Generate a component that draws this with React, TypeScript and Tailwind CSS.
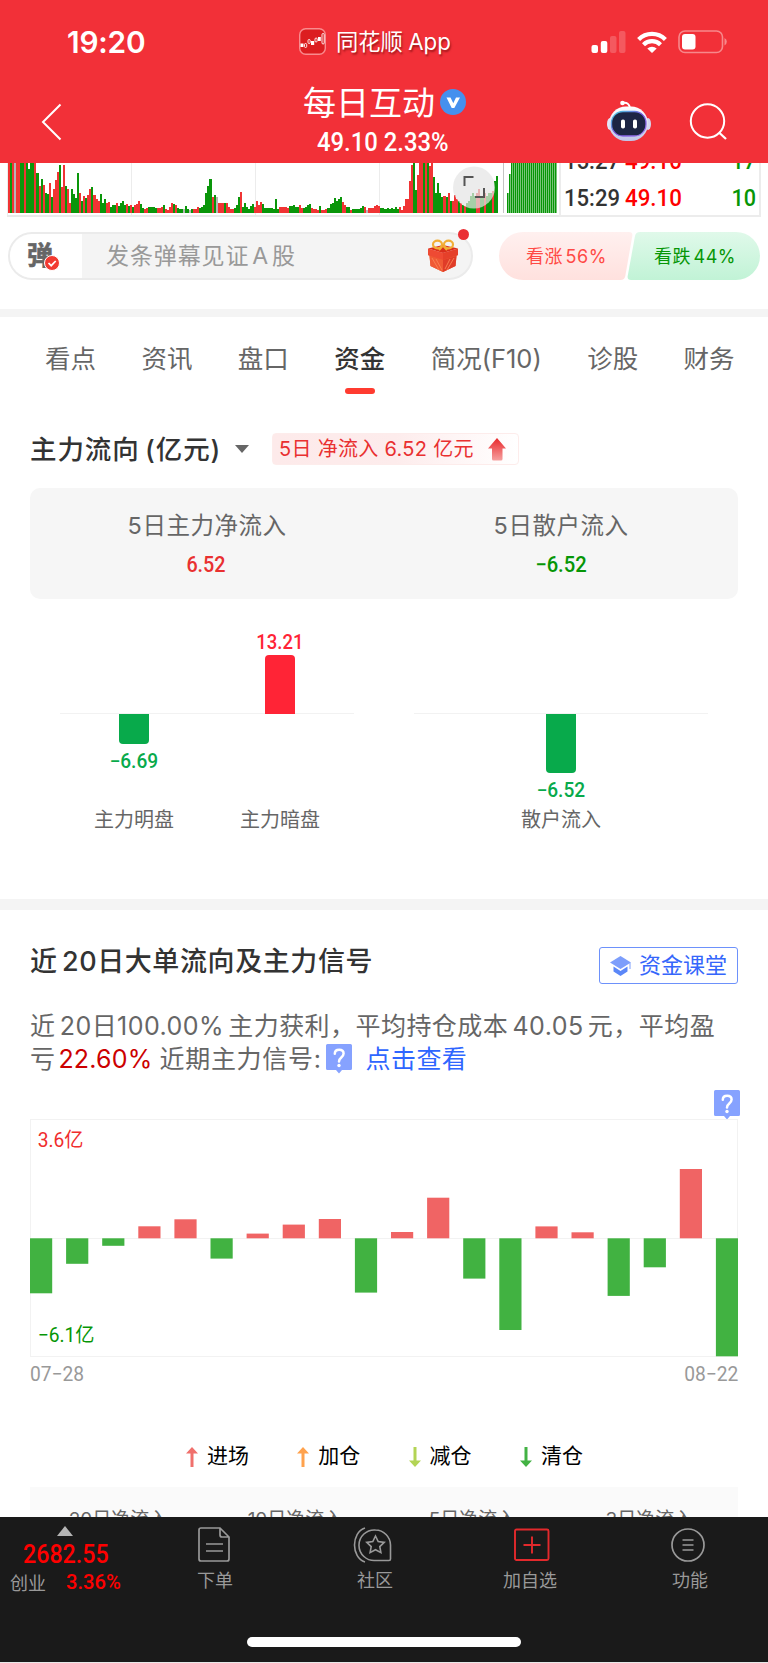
import { useState } from 'react';

const volumes =
  'r150 g150 r150 x150 r150 r150 g150 g150 r150 g150 g130 g150 g150 r148 g118 r80 g100 r82 g58 g55 r90 g48 r70 r98 r122 g142 r76 r142 g80 r70 r28 g70 g55 g44 g118 r60 g36 r50 g45 r52 r70 g76 r54 r42 r34 g56 g30 g40 r28 r32 g18 g22 g22 r28 g20 g28 g36 g22 r26 g20 r22 g18 r22 r26 r36 g26 g14 r12 r14 g16 g18 g18 g14 r14 r14 r18 g22 r12 r8 r18 r30 g26 r24 g14 g12 g12 x12 g20 g12 x8 g12 r10 r12 r16 g14 g16 g22 g60 g80 g100 r46 g54 x48 r30 r28 r28 g30 r28 r16 r12 r12 g14 g22 g46 r62 g16 g30 g18 g12 g20 g26 r18 r34 r22 r32 g26 g14 g14 g14 g14 g12 g40 g12 r16 r18 r18 r17 r14 g20 g20 g22 g16 g16 r22 r14 g14 g18 g22 g26 r14 r12 r12 r8 g20 r8 r8 r10 g14 g26 g30 g44 g34 g40 g46 r32 r22 g16 g16 r8 g12 g10 g12 g12 g14 g20 r16 x8 r14 r14 r14 r20 r22 r20 g14 g14 g12 g14 g12 g14 g12 g16 g12 r16 r8 r20 r40 r40 r96 r142 g150 g68 r112 r150 r150 g150 r150 g150 r140 r150 g108 g60 g88 g60 g48 r50 g48 r60 g36 r34 r54 r40 g36 r28 g24 r20 g30 g34 g50 g60 g50 r60 r70 g50 g50 r60 g50 g60 g60 r66 g95 g110'
    .split(' ')
    .map((s) => ({ tone: s[0], h: Number(s.slice(1)) / 3 }));

const toneColor: Record<string, string> = { r: '#f03434', g: '#0a960a', x: '#b5b5b5' };

// 正为流入，负为流出
const flows = [
  -55, -25.5, -7.5, 12, 19, -20.3, 4.7, 13.7, 19.3, -54.3, 6.3, 40.6, -40.3, -91.7, 11.9, 6, -57.6, -29, 69.3, -118,
];

const tabs = ['看点', '资讯', '盘口', '资金', '简况(F10)', '诊股', '财务'];

const signals = [
  { name: '进场', color: '#f0706c', up: true },
  { name: '加仓', color: '#ffa24d', up: true },
  { name: '减仓', color: '#b3d455', up: false },
  { name: '清仓', color: '#43b244', up: false },
];

function StatusBar() {
  return (
    <div className="flex h-[80px] items-center pt-[4px] text-white">
      <span className="ml-[67px] w-[232px] font-['Inter'] text-[29.800px] font-semibold tracking-[-0.200px]">19:20</span>
      <svg width="27" height="27" viewBox="0 0 27 27" className="-mt-[2px]">
        <rect x="0.7" y="0.7" width="25.6" height="25.6" rx="6" fill="#dc1d20" stroke="#f98b8e" strokeWidth="1.4" />
        <path d="M1.500 19v-3.500h3V19zM12 17v-4h3.200v4zM19 13V9h2.800v4z" fill="#fff" />
        <g fill="none" stroke="#fff" strokeWidth="0.9">
          <rect x="5.500" y="15.500" width="2.200" height="4" rx="1.100" />
          <rect x="9" y="11.500" width="2.200" height="4" rx="1.100" />
          <rect x="16" y="10" width="2.200" height="4" rx="1.100" />
          <rect x="23" y="5.500" width="2.200" height="10.500" rx="1.100" />
        </g>
      </svg>
      <span className="ml-[10px] w-[254px] whitespace-nowrap font-['Inter','Noto_Sans_CJK_SC',sans-serif] text-[22.300px] [text-shadow:1px_2px_2px_rgba(90,0,0,0.55)] [word-spacing:-1px]">
        同花顺 App
      </span>
      <svg width="36" height="23" viewBox="0 0 36 23" fill="#fff" className="ml-px">
        <rect x="0.500" y="14" width="6.500" height="8" rx="2" />
        <rect x="9.800" y="10" width="6.500" height="12" rx="2" />
        <rect x="19" y="5" width="6.500" height="17" rx="2" opacity="0.2" />
        <rect x="28" y="0" width="6.500" height="22" rx="2" opacity="0.2" />
      </svg>
      <svg width="30" height="22" viewBox="0 0 30 22" className="ml-[10px]">
        <g fill="none" stroke="#fff" strokeWidth="4.200">
          <path d="M1.600 8.500a19 19 0 0 1 26.800 0" />
          <path d="M6.500 13.700a12 12 0 0 1 17 0" />
        </g>
        <path d="M10.300 17.600a6.700 6.700 0 0 1 9.400 0L15 22z" fill="#fff" />
      </svg>
      <svg width="50" height="24" viewBox="0 0 50 24" className="ml-[11px]">
        <rect x="1" y="1" width="43.500" height="21.500" rx="6" fill="none" stroke="#f7888b" strokeWidth="1.600" />
        <rect x="4" y="4" width="13.500" height="15.500" rx="3" fill="#fff" />
        <path d="M46.500 8v7.500q2.300-1.300 2.300-3.750T46.500 8z" fill="#f7888b" />
      </svg>
    </div>
  );
}

function Robot() {
  return (
    <svg width="46" height="42" viewBox="0 0 46 42">
      <defs>
        <linearGradient id="shell" x1="0" y1="0" x2="0" y2="1">
          <stop offset="0" stopColor="#ffffff" />
          <stop offset="1" stopColor="#bfc4e8" />
        </linearGradient>
        <linearGradient id="ring" x1="0" y1="0" x2="1" y2="1">
          <stop offset="0" stopColor="#42d4dc" />
          <stop offset="0.5" stopColor="#7b57e0" />
          <stop offset="1" stopColor="#a07ef2" />
        </linearGradient>
      </defs>
      <path d="M17 3q6-1 7 5" fill="none" stroke="#fff" strokeWidth="2" />
      <circle cx="16.500" cy="3" r="2.300" fill="#fff" />
      <ellipse cx="4" cy="24" rx="3" ry="6" fill="#e3e5f7" />
      <ellipse cx="42" cy="24" rx="3" ry="6" fill="#d5d8f0" />
      <rect x="3" y="6.500" width="39" height="34.500" rx="17" fill="url(#shell)" />
      <rect x="5.500" y="11.500" width="34.500" height="24.500" rx="11.500" fill="#1d2544" stroke="url(#ring)" strokeWidth="1.300" />
      <rect x="15" y="19.500" width="4" height="9" rx="1.800" fill="#fff" />
      <rect x="27" y="19.500" width="4" height="9" rx="1.800" fill="#fff" />
    </svg>
  );
}

function Header() {
  return (
    <header className="h-[163px] bg-[#f23038]">
      <StatusBar />
      <div className="flex h-[83px] text-white">
        <svg width="22" height="40" viewBox="0 0 22 40" className="ml-[41px] mt-[22px]">
          <path d="M19.500 2.500 2 20l17.500 17.500" fill="none" stroke="#fff" strokeWidth="2" />
        </svg>
        <div className="ml-[240px] w-[303px]">
          <div className="flex h-[42px] items-center">
            <span className="font-['Noto_Sans_CJK_SC',sans-serif] text-[33px] leading-[40px]">每日互动</span>
            <svg width="26" height="26" viewBox="0 0 26 26" className="ml-[5px] mt-[2px]">
              <circle cx="13" cy="13" r="13" fill="#4590ee" />
              <path d="M6.500 8.500h4l2.800 5.800L16 8.500h4L14.300 19h-2.600z" fill="#fff" />
            </svg>
          </div>
          <div className="ml-[14px] mt-[3px] w-fit origin-left scale-x-[0.935] whitespace-nowrap font-['Roboto'] text-[25.500px] font-medium leading-[34px]">
            49.10 2.33%
          </div>
        </div>
        <div className="mt-[20px]">
          <Robot />
        </div>
        <svg width="40" height="40" viewBox="0 0 40 40" className="ml-[37px] mt-[22px]">
          <circle cx="18.500" cy="19" r="16.700" fill="none" stroke="#fff" strokeWidth="2" />
          <path d="m30 30.500 7 6.500" stroke="#fff" strokeWidth="2.300" />
        </svg>
      </div>
    </header>
  );
}

function TradeRow({ time, price, amount }: { time: string; price: string; amount: string }) {
  return (
    <div className="flex h-[37px]">
      <span className="ml-[3px] w-[61px] origin-left scale-x-[0.9] text-[#333]">{time}</span>
      <span className="w-[80px] origin-left scale-x-[0.91] text-[#fe0000]">{price}</span>
      <span className="w-[51px] origin-right scale-x-[0.88] text-right text-[#069606]">{amount}</span>
    </div>
  );
}

function VolumePanel() {
  return (
    <div className="flex h-[54px] overflow-hidden bg-white">
      <div className="relative">
        <svg width="559" height="54" viewBox="0 0 559 54" shapeRendering="crispEdges">
          <path d="M7.500 0V53M131 0v53M255 0v53M379 0v53" stroke="#ececec" />
          <path d="M7 52.500h552" stroke="#e9e9e9" strokeWidth="2" />
          <path d="M503.500 0v50" stroke="#c4c4c4" strokeWidth="1.500" />
          {volumes.map((v, i) => (
            <rect key={i} x={8 + i * 2.035} y={49.700 - v.h} width="2.035" height={v.h} fill={toneColor[v.tone]} />
          ))}
          {Array.from({ length: 25 }, (_, i) => {
            const h = i === 0 ? 20 : i === 1 ? 39 : 50;
            return (
              <g key={i}>
                <rect x={506.500 + i * 2} y={49.700 - h} width="2" height={h} fill="#78c478" />
                <rect x={506.500 + i * 2} y={49.700 - h} width="1" height={h} fill="#069606" />
              </g>
            );
          })}
        </svg>
        <svg width="43" height="43" viewBox="0 0 43 43" className="absolute left-[453px] top-[3px]">
          <circle cx="21" cy="21.500" r="21" fill="#e5e5e5" fillOpacity="0.720" />
          <path d="M11.500 20v-9h9M31 22v9h-9" fill="none" stroke="#555" strokeWidth="2" />
        </svg>
      </div>
      <div className="w-[202px] border-x-2 border-b-2 border-[#ececec] font-['Roboto'] text-[24.500px] font-medium leading-[36px]">
        <div className="-mt-[20px]">
          <TradeRow time="15:27" price="49.10" amount="17" />
          <TradeRow time="15:29" price="49.10" amount="10" />
        </div>
      </div>
    </div>
  );
}

function Gift() {
  return (
    <svg width="32" height="34" viewBox="0 0 32 34">
      <path d="M1 10 16 14l15-4v6l-1.500 1-1 10L16 33 3.500 27l-1-10L1 16z" fill="#ee5a31" />
      <path d="M1 9.500 16 6l15 3.500L16 14z" fill="#d92d1c" />
      <path d="M16 14 31 9.500V16l-15 5z" fill="#e5402a" />
      <path d="M16 14 1 9.500V16l15 5z" fill="#ee4a33" />
      <path d="M2.500 17 16 21v12L3.500 27z" fill="#f05a35" />
      <path d="M29.500 17 16 21v12l12.500-6z" fill="#e03c28" />
      <path d="m5 19 7 12M9 20l6 11M27 19l-7 12M23 20l-5 10" stroke="#f98355" strokeWidth="0.9" />
      <g fill="none" stroke="#f2ae36" strokeWidth="2.200">
        <ellipse cx="10.500" cy="5.500" rx="4.500" ry="3.800" />
        <ellipse cx="21.500" cy="5.500" rx="4.500" ry="3.800" />
        <path d="m15.500 7-3.500 4M16.500 7l3.500 4" />
      </g>
    </svg>
  );
}

function DanmuRow() {
  return (
    <div className="flex h-[92px] pt-[15px] font-['Inter','Noto_Sans_CJK_SC',sans-serif]">
      <div className="relative ml-[8px] flex h-[48px] w-[465px] rounded-full border-2 border-[#ebebeb] bg-[#f4f4f4]">
        <div className="relative h-[44px] w-[72px] rounded-l-full bg-white">
          <span className="ml-[17px] font-['Noto_Sans_CJK_SC',sans-serif] text-[26px] font-bold leading-[40px] text-[#666] [-webkit-text-stroke:0.600px_#666]">
            弹
          </span>
          <svg width="16" height="16" viewBox="0 0 16 16" className="absolute left-[34px] top-[21px]">
            <circle cx="8" cy="8" r="7.500" fill="#f23a31" stroke="#fff" />
            <path d="m4.500 8 2.700 2.700 4.500-4.700" fill="none" stroke="#fff" strokeWidth="1.700" />
          </svg>
        </div>
        <span className="ml-[24px] whitespace-nowrap text-[23px] leading-[44px] tracking-[0.900px] text-[#999] [word-spacing:-4.500px]">
          发条弹幕见证 A 股
        </span>
        <div className="absolute left-[417px] top-[5px]">
          <Gift />
        </div>
        <i className="absolute left-[448px] top-[-5px] h-[11px] w-[11px] rounded-full bg-[#ea2f35]"></i>
      </div>
      <div className="relative ml-[26px] h-[48px] w-[262px]">
        <svg width="262" height="48" viewBox="0 0 262 48" className="absolute inset-0">
          <defs>
            <linearGradient id="up" x1="0" y1="0" x2="0" y2="1">
              <stop offset="0" stopColor="#fff0ef" />
              <stop offset="1" stopColor="#ffe1de" />
            </linearGradient>
            <linearGradient id="down" x1="0" y1="0" x2="0" y2="1">
              <stop offset="0" stopColor="#e0f9ea" />
              <stop offset="1" stopColor="#c1f3d6" />
            </linearGradient>
          </defs>
          <path d="M24 0H130q4 0 3.300 4l-7 40q-.7 4-4.700 4H24A24 24 0 0 1 24 0z" fill="url(#up)" />
          <path d="M141 0h96a24 24 0 0 1 0 48H132q-4 0-3.300-4l7.300-40q.8-4 5-4z" fill="url(#down)" />
        </svg>
        <div className="relative flex h-[48px] items-center whitespace-nowrap text-[18px] tracking-[0.500px] [word-spacing:-3px]">
          <span className="ml-[27px] w-[128px] text-[#ff4a45]">看涨 56%</span>
          <span className="text-[#069606]">看跌 44%</span>
        </div>
      </div>
    </div>
  );
}

function FundFlow() {
  return (
    <section className="h-[481px] px-[30px]">
      <div className="flex h-[38px] items-center">
        <h2 className="mt-[2px] w-[205px] whitespace-nowrap font-['Inter','Noto_Sans_CJK_SC',sans-serif] text-[26.500px] font-medium tracking-[0.900px] text-[#333] [word-spacing:-2.500px]">
          主力流向 (亿元)
        </h2>
        <svg width="14" height="8" viewBox="0 0 14 8">
          <path d="M0 0h14L7 8z" fill="#666" />
        </svg>
        <div className="ml-[23px] flex h-[32px] w-[247px] items-center rounded border border-[#fdeceb] bg-linear-to-r from-[#fdeaea] via-[#fdecec] to-white pl-[6px]">
          <span className="w-[209px] whitespace-nowrap font-['Inter','Noto_Sans_CJK_SC',sans-serif] text-[20px] tracking-[0.300px] text-[#e93030]">
            5日 净流入 6.52 亿元
          </span>
          <svg width="18" height="23" viewBox="0 0 18 23">
            <defs>
              <linearGradient id="arrow" x1="0" y1="0" x2="0" y2="1">
                <stop offset="0" stopColor="#e8282c" />
                <stop offset="1" stopColor="#f6a09f" />
              </linearGradient>
            </defs>
            <path d="M9 0 18 10.500h-3.500V21q0 1.500-1.500 1.500H5.500Q4 22.500 4 21V10.500H0z" fill="url(#arrow)" />
          </svg>
        </div>
      </div>
      <div className="mt-[20px] grid h-[111px] grid-cols-2 rounded-[10px] bg-[#f6f6f6] pt-[19px] text-center">
        <div>
          <div className="font-['Inter','Noto_Sans_CJK_SC',sans-serif] text-[23.500px] leading-[38px] tracking-[0.500px] text-[#666]">
            5日主力净流入
          </div>
          <div className="mt-[2px] -translate-x-px scale-x-[0.92] font-['Roboto'] text-[21.500px] font-medium leading-[36px] text-[#e93030]">
            6.52
          </div>
        </div>
        <div>
          <div className="font-['Inter','Noto_Sans_CJK_SC',sans-serif] text-[23.500px] leading-[38px] tracking-[0.500px] text-[#666]">
            5日散户流入
          </div>
          <div className="mt-[2px] scale-x-[0.94] font-['Roboto'] text-[21.500px] font-medium leading-[36px] text-[#069606]">−6.52</div>
        </div>
      </div>
      <div className="mt-[28px] flex justify-between px-[30px]">
        <div className="relative flex w-[294px] justify-center">
          <i className="absolute left-0 top-[86px] h-px w-full bg-[#f2f2f2]"></i>
          <FlowBar label="主力明盘" value="−6.69" height={30} />
          <FlowBar label="主力暗盘" value="13.21" height={59} up />
        </div>
        <div className="relative flex w-[294px] justify-center">
          <i className="absolute left-0 top-[86px] h-px w-full bg-[#f2f2f2]"></i>
          <FlowBar label="散户流入" value="−6.52" height={59} />
        </div>
      </div>
    </section>
  );
}

interface FlowBarProps {
  label: string;
  value: string;
  height: number;
  up?: boolean;
}

function FlowBar({ label, value, height, up }: FlowBarProps) {
  return (
    <div className="relative flex w-[146px] flex-col items-center font-['Roboto'] text-[19.500px] font-medium leading-[24px]">
      <div className="flex h-[87px] flex-col items-center justify-end">
        {up && <span className="scale-x-[0.95] text-[#ff2436]">{value}</span>}
        {up && <i className="w-[30px] rounded-t-[4px] bg-[#ff2436]" style={{ height }}></i>}
      </div>
      <div className="flex h-[91px] flex-col items-center">
        {!up && <i className="w-[30px] rounded-b-[4px] bg-[#08aa4b]" style={{ height }}></i>}
        {!up && <span className="mt-[6px] scale-x-[0.98] text-[#08aa4b]">{value}</span>}
      </div>
      <span className="font-['Noto_Sans_CJK_SC',sans-serif] text-[20px] font-normal leading-[28px] text-[#666]">{label}</span>
    </div>
  );
}

function HelpIcon({ className = '' }: { className?: string }) {
  return (
    <svg width="26" height="30" viewBox="0 0 26 30" className={className}>
      <path d="M1.500 0h23q1.500 0 1.500 1.500v23q0 1.500-1.500 1.500H16l-3 3.500-3-3.500H1.500Q0 26 0 24.500v-23Q0 0 1.500 0z" fill="#86a2ff" />
      <path d="M8.800 9.800q0-4 4.400-4t4.400 3.800q0 2-2.300 3.900T13 17.500" fill="none" stroke="#fff" strokeWidth="2.500" strokeLinecap="round" />
      <circle cx="13" cy="21.500" r="1.700" fill="#fff" />
    </svg>
  );
}

function BigOrders() {
  return (
    <section className="h-[607px] overflow-hidden px-[30px] pt-[37px] font-['Inter','Noto_Sans_CJK_SC',sans-serif]">
      <div className="flex h-[37px] justify-between">
        <h2 className="-mt-[4px] whitespace-nowrap text-[27px] font-medium leading-[37px] tracking-[0.600px] text-[#333] [word-spacing:-3.500px]">
          近 20日大单流向及主力信号
        </h2>
        <button className="flex w-[139px] items-center rounded-[3px] border-[1.500px] border-[#6d91fb] pl-[10px] text-[22px] leading-[30px] text-[#3566fb]">
          <svg width="21" height="20" viewBox="0 0 21 20" className="mr-[8px]">
            <path d="M10.500 0 21 6.500 10.500 13 0 6.500z" fill="#7d9efb" />
            <path d="M3.500 10.500 10.500 15l7-4.500v5L10.500 20l-7-4.500z" fill="#5b87f8" />
            <path d="M20 7v6" stroke="#7d9efb" />
          </svg>
          <span className="-mt-px">资金课堂</span>
        </button>
      </div>
      <div className="mt-[26px] whitespace-nowrap text-[25px] leading-[33px] tracking-[0.400px] text-[#666]">
        <div className="tracking-[0.450px] [word-spacing:-3.200px]">近 20日100.00% 主力获利，平均持仓成本 40.05 元，平均盈</div>
        <div className="flex">
          <span>亏</span>
          <span className="ml-[3px] tracking-[0.200px] text-[#cc0000]">22.60%</span>
          <span className="ml-[7px] tracking-[0.700px]">近期主力信号:</span>
          <HelpIcon className="ml-[4px] mt-px" />
          <span className="ml-[14px] text-[#2e66ff]">点击查看</span>
        </div>
      </div>
      <div className="flex h-[43px] items-end justify-end">
        <HelpIcon className="-mb-px -mr-[2px]" />
      </div>
      <div className="relative h-[238px] border border-[#f2f2f2] font-['Roboto','Noto_Sans_CJK_SC',sans-serif] text-[20px]">
        <svg width="708" height="238" viewBox="0 0 708 238" className="absolute -left-px -top-px">
          <path d="M0 119.500h708" stroke="#f2f2f2" />
          {flows.map((v, i) => (
            <rect
              key={i}
              x={i * 36.100}
              y={v > 0 ? 119.300 - v : 119.300}
              width="22.200"
              height={Math.abs(v)}
              fill={v > 0 ? '#f06464' : '#41b241'}
            />
          ))}
        </svg>
        <div className="relative flex h-full origin-left scale-x-[0.96] flex-col justify-between pb-[8px] pl-[7px] pt-[7px] leading-[26px]">
          <span className="text-[#f02d2d]">3.6亿</span>
          <span className="text-[#069606]">−6.1亿</span>
        </div>
      </div>
      <div className="mt-[4px] flex h-[26px] justify-between font-['Roboto'] text-[20px] leading-[26px] text-[#999]">
        <span className="origin-left scale-x-[0.96]">07−28</span>
        <span className="origin-right scale-x-[0.96]">08−22</span>
      </div>
      <div className="ml-[156px] mt-[56px] flex h-[28px] items-center">
        {signals.map((s) => (
          <div key={s.name} className="flex w-[111.300px] items-center whitespace-nowrap text-[21px] leading-[28px] text-black">
            <svg width="12" height="20" viewBox="0 0 12 20" className={s.up ? 'mr-[9px]' : 'mr-[9px] rotate-180'}>
              <path d="M6 0l6 6.500H7.500V20h-3V6.500H0z" fill={s.color} />
            </svg>
            <span className="-mt-[2px]">{s.name}</span>
          </div>
        ))}
      </div>
      <div className="mt-[16px] grid h-[50px] grid-cols-4 bg-[#fafafa] pt-[19px] text-center text-[19px] leading-[28px] text-[#666]">
        {['20', '10', '5', '3'].map((d) => (
          <span key={d}>{d}日净流入</span>
        ))}
      </div>
    </section>
  );
}

function BottomBar() {
  const item = "flex h-[75px] flex-col items-center justify-between font-['Noto_Sans_CJK_SC',sans-serif] text-[18px] leading-[26px] text-[#999]";
  return (
    <footer className="h-[145px] bg-[#1a1a1a]">
      <div className="flex h-[120px]">
        <div className="w-[131px] pt-[9px] font-['Roboto'] font-medium text-[#fe0000]">
          <svg width="16" height="10" viewBox="0 0 16 10" className="ml-[57px]">
            <path d="M0 10 8 0l8 10z" fill="#b5b5b5" />
          </svg>
          <div className="ml-[23px] mt-[4px] w-fit origin-left scale-x-[0.91] text-[25.500px] leading-[28px]">2682.55</div>
          <div className="mt-px flex items-center leading-[26px]">
            <span className="ml-[10px] w-[56px] font-['Noto_Sans_CJK_SC',sans-serif] text-[18px] font-normal text-[#999]">创业</span>
            <span className="-mt-px origin-left scale-x-[0.96] text-[21px]">3.36%</span>
          </div>
        </div>
        <div className={`${item} ml-[24px] w-[120px]`}>
          <svg width="33" height="36" viewBox="0 0 33 36" className="-ml-[2px] mt-[10px]" fill="none" stroke="#999" strokeWidth="1.700">
            <path d="M3 1h19l9 9v22q0 2-2 2H3q-2 0-2-2V3q0-2 2-2zM22 1v7q0 2 2 2h7M8 17h17M8 24h17" />
          </svg>
          <span>下单</span>
        </div>
        <div className={`${item} ml-[40px] w-[120px]`}>
          <svg width="39" height="36" viewBox="0 0 39 36" className="-ml-[5px] mt-[10px]" fill="none" stroke="#999" strokeWidth="1.600">
            <path d="M12 1C5 3 1.500 11 1.500 18S5 33 12 35" />
            <path d="M22.500 3a15.300 15.300 0 1 0 0 30.500H36q1.500 0 1.500-1.500V18A15.200 15.200 0 0 0 22.500 3z" />
            <path d="m22.500 9 2.700 5.600 6 .8-4.400 4.200 1.100 6-5.400-2.900-5.400 2.900 1.100-6-4.400-4.200 6-.8z" />
          </svg>
          <span>社区</span>
        </div>
        <div className={`${item} ml-[35px] w-[120px]`}>
          <svg width="36" height="34" viewBox="0 0 36 34" className="ml-[4px] mt-[11px]" fill="none" stroke="#e3292c" strokeWidth="1.900">
            <rect x="1" y="1.500" width="33.500" height="30.500" rx="1.500" />
            <path d="M9.500 17h17M18 8.500v17" />
          </svg>
          <span>加自选</span>
        </div>
        <div className={`${item} ml-[40px] w-[120px]`}>
          <svg width="34" height="34" viewBox="0 0 34 34" className="-ml-[4px] mt-[11px]" fill="none" stroke="#999" strokeWidth="1.700">
            <circle cx="17" cy="17" r="16" />
            <path d="M11.500 12h11M11.500 17h11M11.500 22h11" />
          </svg>
          <span>功能</span>
        </div>
      </div>
      <div className="ml-[247px] h-[10px] w-[274px] rounded-full bg-white"></div>
    </footer>
  );
}

export default function App() {
  const [active, setActive] = useState('资金');

  return (
    <div className="h-[1663px] w-[768px] overflow-hidden bg-white">
      <Header />
      <VolumePanel />
      <DanmuRow />
      <div className="h-[8px] bg-[#f4f4f4]"></div>
      <nav className="flex h-[113px] pl-[45px] pt-[23px] font-['Inter','Noto_Sans_CJK_SC',sans-serif] text-[25.500px] leading-[38px] text-[#666]">
        {tabs.map((t) => (
          <button
            key={t}
            onClick={() => setActive(t)}
            className="mr-[45.400px] flex h-[60px] shrink-0 flex-col items-center whitespace-nowrap"
          >
            <span className={t === active ? 'font-medium text-[#333]' : ''}>{t}</span>
            {t === active && <i className="mt-[10px] h-[6px] w-[30px] rounded-[3px] bg-[#ff3b30]"></i>}
          </button>
        ))}
      </nav>
      <FundFlow />
      <div className="-mt-[12px] h-[11px] bg-[#f4f4f4]"></div>
      <BigOrders />
      <BottomBar />
      <div className="h-px bg-[#e8e8e8]"></div>
    </div>
  );
}
